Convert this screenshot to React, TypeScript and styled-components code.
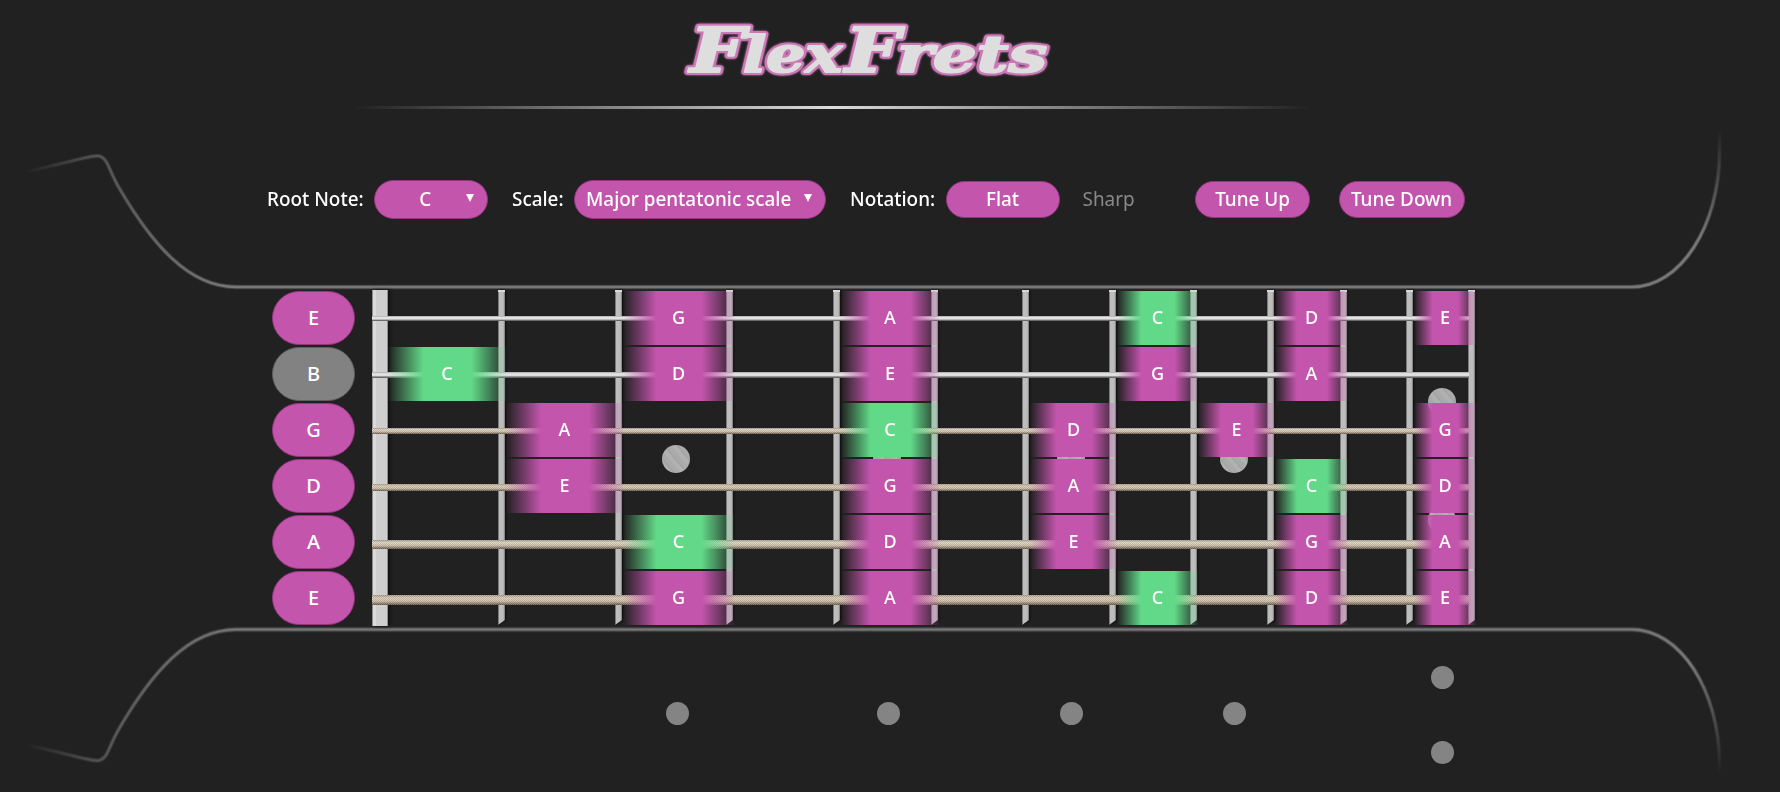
import React from "react";
import styled, { createGlobalStyle, css } from "styled-components";

const PINK = "#c455ad";
const GREEN = "#62d988";
const GREY = "#828282";

const GlobalStyle = createGlobalStyle`
  * { box-sizing: border-box; }
  body {
    margin: 0;
    background: #212121;
    color: #fff;
    font-family: "Noto Sans", "Open Sans", sans-serif;
    overflow: hidden;
  }
  button { font: inherit; color: inherit; margin: 0; }
`;

const Page = styled.div`
  position: relative;
  width: 1780px;
  height: 792px;
  display: flex;
  flex-direction: column;
`;

const BodyOutline = styled.svg`
  position: absolute;
  inset: 0;
  pointer-events: none;
`;

const Header = styled.header`
  height: 109px;
  padding: 12px 0 0 352px;
  display: flex;
  flex-direction: column;
  justify-content: space-between;
`;

const Logo = styled.svg`
  display: block;
  margin-left: 323px;
  overflow: visible;
  font-family: "DejaVu Serif", serif;
  font-weight: 700;
  font-style: italic;
  fill: #dedede;
  stroke-linejoin: round;
  filter: drop-shadow(0 0 1px #cb78b6);
`;

const LogoLayer = styled.g<{ $stroke: string; $w: number }>`
  stroke: ${(p) => p.$stroke};
  stroke-width: ${(p) => p.$w}px;
`;

const Divider = styled.div`
  width: 960px;
  height: 3px;
  background: linear-gradient(90deg, transparent, #dcdcdc 50%, transparent);
`;

const Controls = styled.div`
  height: 39px;
  margin: 71px 0 71px 267px;
  display: flex;
  align-items: center;
  font-size: 20px;
  font-weight: 500;
`;

const Squeeze = styled.span`
  display: inline-block;
  white-space: nowrap;
  transform: scaleX(0.945);
  transform-origin: left center;
`;

const Label = styled.span<{ $w: number }>`
  width: ${(p) => p.$w}px;
  white-space: nowrap;
  padding-bottom: 2px;
`;

const pill = css`
  display: flex;
  align-items: center;
  justify-content: center;
  border: 1px solid #93357f;
  background: ${PINK};
  padding: 0;
  white-space: nowrap;
`;

const Select = styled.div<{ $w: number; $after: number; $pad: number }>`
  ${pill}
  width: ${(p) => p.$w}px;
  height: 39px;
  border-radius: 20px;
  margin-right: ${(p) => p.$after}px;
  padding: 0 13px 3px ${(p) => p.$pad}px;
  gap: 13px;
`;

const SelectValue = styled.span`
  flex: 1;
  min-width: 0;
  display: flex;
  justify-content: center;
  & > span { transform-origin: center; }
`;

const Caret = styled.span`
  width: 8px;
  height: 8px;
  background: #fff;
  clip-path: polygon(0 0, 100% 0, 50% 100%);
`;

const Button = styled.button<{ $w: number; $after: number; $off?: boolean }>`
  ${pill}
  width: ${(p) => p.$w}px;
  height: 37px;
  border-radius: 19px;
  margin-right: ${(p) => p.$after}px;
  padding-bottom: 2px;
  ${(p) => p.$off && css`background: none; border-color: transparent; color: #8a8a8a; font-weight: 400;`}
  & > span { transform-origin: center; }
`;

const Neck = styled.main`
  display: flex;
  height: 336px;
  padding-left: 272px;
  gap: 17px;
`;

const Tuners = styled.div`
  width: 83px;
  display: flex;
  flex-direction: column;
  gap: 2px;
  padding: 1px 0;
`;

const Tuner = styled.button<{ $off: boolean }>`
  ${pill}
  height: 54px;
  border-radius: 27px;
  font-size: 20px;
  font-weight: 500;
  padding-bottom: 2px;
  ${(p) => p.$off && css`background: ${GREY}; border-color: #5f5f5f;`}
`;

const Board = styled.div`
  position: relative;
  width: 1104px;
  height: 336px;
`;

const Layer = styled.div`
  position: absolute;
  inset: 0;
  display: flex;
`;

const Nut = styled.div`
  width: 16px;
  background: linear-gradient(90deg, #8c8c8c 1px, #dadada 1px 4px, #cecece 4px 15px, #909090 15px);
  box-shadow: 2px 0 3px #111;
`;

const FretSpace = styled.div<{ $w: number }>`
  width: ${(p) => p.$w}px;
  display: flex;
  justify-content: flex-end;
  padding-right: 1px;
  filter: drop-shadow(1px 0 1px #0c0c0c);
`;

const Fret = styled.div`
  width: 7px;
  background: linear-gradient(90deg, #7c7c7c 1px, #bdbdbd 1px 5px, #a8a8a8 6px, #6a6a6a 7px);
  clip-path: polygon(0 0, 100% 0, 100% calc(100% - 6px), 0 calc(100% - 1px));
  border-top: 2px solid #d8d8d8;
`;

const Inlay = styled.i<{ $x: number; $y: number }>`
  position: absolute;
  left: ${(p) => p.$x - 386}px;
  top: ${(p) => p.$y - 304}px;
  width: 28px;
  height: 28px;
  border-radius: 50%;
  background: repeating-linear-gradient(50deg, #aaa 0 4px, #b1b1b1 5px 8px, #a3a3a3 9px 10px);
`;

const Rows = styled(Layer)`
  flex-direction: column;
`;

const Row = styled.div`
  position: relative;
  height: 56px;
  display: flex;
  padding: 1px 0 1px 16px;
`;

const StringLine = styled.div<{ $top: number; $h: number; $wound: number }>`
  position: absolute;
  left: 0;
  width: 1097px;
  top: ${(p) => p.$top}px;
  height: ${(p) => p.$h}px;
  ${(p) =>
    p.$wound === 0
      ? css`background: linear-gradient(#a5a5a5, #e6e6e6 30%, #dadada 65%, #777 80%, #5a5a5a);`
      : css`background:
          repeating-conic-gradient(rgba(70, 50, 30, 0.2) 0 25%, rgba(255, 255, 255, 0.16) 0 50%) 0 0 / 2px 2px,
          linear-gradient(#a89a85, ${p.$wound === 1 ? "#e2dccf" : "#e0d0bb"} 28%, #cfc1ad 62%, #857766 88%, #5c5348);`}
`;

const NoteCell = styled.div<{ $w: number; $color?: string }>`
  position: relative;
  width: ${(p) => p.$w}px;
  display: flex;
  align-items: center;
  justify-content: center;
  font-size: 18px;
  font-weight: 500;
  padding-bottom: 2px;
  ${(p) =>
    p.$color &&
    css`background: linear-gradient(90deg, transparent, ${p.$color} 30%, ${p.$color} 71%, transparent 102%);`}
`;

const Marker = styled.i<{ $x: number; $y: number }>`
  position: absolute;
  left: ${(p) => p.$x - 11.5}px;
  top: ${(p) => p.$y - 11.5}px;
  width: 23px;
  height: 23px;
  border-radius: 50%;
  background: #848484;
`;

const MarkerStrip = styled.div`
  position: absolute;
  inset: 0;
  pointer-events: none;
`;

const widths = [118, 117, 111, 107, 98, 91, 87, 81, 77, 73, 66, 62];

const strings = [
  { open: "E", top: 26, h: 5, wound: 0, notes: { 3: "G", 5: "A", 8: "C", 10: "D", 12: "E" } },
  { open: "B", top: 26, h: 6, wound: 0, notes: { 1: "C", 3: "D", 5: "E", 8: "G", 10: "A" } },
  { open: "G", top: 26, h: 6, wound: 1, notes: { 2: "A", 5: "C", 7: "D", 9: "E", 12: "G" } },
  { open: "D", top: 26, h: 7, wound: 2, notes: { 2: "E", 5: "G", 7: "A", 10: "C", 12: "D" } },
  { open: "A", top: 26, h: 9, wound: 1, notes: { 3: "C", 5: "D", 7: "E", 10: "G", 12: "A" } },
  { open: "E", top: 25, h: 10, wound: 2, notes: { 3: "G", 5: "A", 8: "C", 10: "D", 12: "E" } },
] as { open: string; top: number; h: number; wound: number; notes: Record<number, string> }[];

const inlays = [[675.5, 459], [887, 459], [1070.5, 459], [1233.5, 459], [1441.5, 402], [1441.5, 520]];
const markers = [[677, 713], [888.5, 713], [1071.5, 713], [1234.5, 713], [1442.5, 677], [1442.5, 752.5]];

const outline =
  "M22 173 L84 158 C97 155 102 154 107 163 C110 169 113 177 118 186 C151 243 188 287 236 287 H1632 C1680 287 1719.5 226.5 1719.5 152 V128";

const logoParts = [
  { text: "F", x: 15, size: 61, w: 55 },
  { text: "lex", x: 68, size: 50, w: 99 },
  { text: "F", x: 170, size: 61, w: 55 },
  { text: "rets", x: 222, size: 50, w: 150 },
];

function LogoText({ hidden }: { hidden?: boolean }) {
  return (
    <>
      {logoParts.map((p) => (
        <text
          key={p.x}
          x={p.x}
          y="60"
          fontSize={p.size}
          textLength={p.w}
          lengthAdjust="spacingAndGlyphs"
          aria-hidden={hidden}
        >
          {p.text}
        </text>
      ))}
    </>
  );
}

export default function App() {
  return (
    <>
      <GlobalStyle />
      <Page>
        <BodyOutline width="1780" height="792" fill="none">
          <defs>
            <linearGradient id="fade" gradientUnits="userSpaceOnUse" x1="24" y1="0" x2="1780" y2="0">
              <stop offset="0" stopColor="#777" stopOpacity="0" />
              <stop offset="0.04" stopColor="#777" stopOpacity="0.45" />
              <stop offset="0.12" stopColor="#777" />
              <stop offset="1" stopColor="#777" />
            </linearGradient>
            <linearGradient id="rise" x1="0" y1="0" x2="0" y2="1">
              <stop offset="0" stopColor="#000" />
              <stop offset="0.17" stopColor="#fff" />
              <stop offset="0.83" stopColor="#fff" />
              <stop offset="1" stopColor="#000" />
            </linearGradient>
            <mask id="tip" maskUnits="userSpaceOnUse" x="0" y="0" width="1780" height="792">
              <rect width="1500" height="792" fill="#fff" />
              <rect x="1500" y="128" width="280" height="646" fill="url(#rise)" />
            </mask>
          </defs>
          <g mask="url(#tip)">
            <g id="side">
              <path d={outline} stroke="url(#fade)" strokeWidth="4.5" opacity="0.4" />
              <path d={outline} stroke="url(#fade)" strokeWidth="2.6" />
            </g>
            <use href="#side" transform="translate(0 916.5) scale(1 -1)" />
          </g>
        </BodyOutline>

        <Header>
          <Logo width="400" height="70" role="img" aria-label="FlexFrets">
            <LogoLayer $stroke="#cb78b6" $w={6}><LogoText hidden /></LogoLayer>
            <LogoLayer $stroke="#dedede" $w={2}><LogoText /></LogoLayer>
          </Logo>
          <Divider />
        </Header>

        <Controls>
          <Label $w={107}><Squeeze>Root Note:</Squeeze></Label>
          <Select $w={114} $after={24} $pad={22}>
            <SelectValue><Squeeze>C</Squeeze></SelectValue>
            <Caret />
          </Select>
          <Label $w={62}><Squeeze>Scale:</Squeeze></Label>
          <Select $w={252} $after={24} $pad={12}>
            <SelectValue><Squeeze>Major pentatonic scale</Squeeze></SelectValue>
            <Caret />
          </Select>
          <Label $w={96}><Squeeze>Notation:</Squeeze></Label>
          <Button $w={114} $after={0}><Squeeze>Flat</Squeeze></Button>
          <Button $w={98} $after={37} $off><Squeeze>Sharp</Squeeze></Button>
          <Button $w={115} $after={29}><Squeeze>Tune Up</Squeeze></Button>
          <Button $w={126} $after={0}><Squeeze>Tune Down</Squeeze></Button>
        </Controls>

        <Neck>
          <Tuners>
            {strings.map((s, i) => (
              <Tuner key={i} $off={s.open === "B"}>{s.open}</Tuner>
            ))}
          </Tuners>
          <Board>
            <Layer>
              <Nut />
              {widths.map((w, i) => (
                <FretSpace key={i} $w={w}><Fret /></FretSpace>
              ))}
            </Layer>
            {inlays.map(([x, y], i) => <Inlay key={i} $x={x} $y={y} />)}
            <Rows>
              {strings.map((s, i) => (
                <Row key={i}>
                  <StringLine $top={s.top} $h={s.h} $wound={s.wound} />
                  {widths.map((w, f) => {
                    const note = s.notes[f + 1];
                    return (
                      <NoteCell key={f} $w={w} $color={note && (note === "C" ? GREEN : PINK)}>
                        {note}
                      </NoteCell>
                    );
                  })}
                </Row>
              ))}
            </Rows>
          </Board>
        </Neck>

        <MarkerStrip>
          {markers.map(([x, y], i) => <Marker key={i} $x={x} $y={y} />)}
        </MarkerStrip>
      </Page>
    </>
  );
}
